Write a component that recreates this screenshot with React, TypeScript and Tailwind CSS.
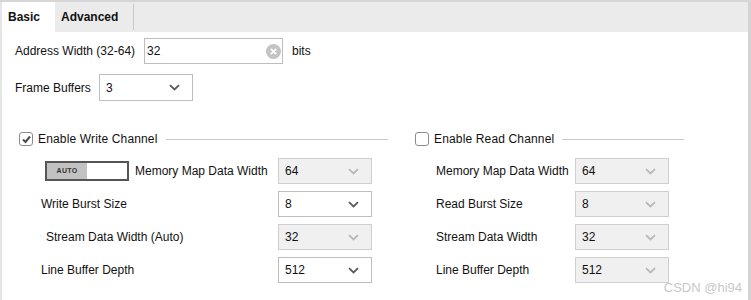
import React from "react";

const Chevron = ({ disabled }: { disabled?: boolean }) => (
  <svg width="11" height="7" viewBox="0 0 11 7" className="shrink-0">
    <path d="M1 1.2 L5.5 5.5 L10 1.2" fill="none" stroke={disabled ? "#b8b8b8" : "#5a5a5a"} strokeWidth="1.8" />
  </svg>
);

const Select = ({ value, disabled, w = 94, h = 26 }: { value: string; disabled?: boolean; w?: number; h?: number }) => (
  <div
    className={`flex items-center justify-between pl-[6px] pr-[12px] border ${
      disabled ? "bg-[#f0f0f0] border-[#cfcfcf]" : "bg-white border-[#bdbdbd]"
    }`}
    style={{ width: w, height: h }}
  >
    <span className="text-[12px] text-[#111]">{value}</span>
    <Chevron disabled={disabled} />
  </div>
);

const Checkbox = ({ checked }: { checked?: boolean }) => (
  <div className="w-[14px] h-[14px] rounded-[3px] border border-[#8c8c8c] bg-white flex items-center justify-center shrink-0">
    {checked && (
      <svg width="11" height="11" viewBox="0 0 11 11">
        <path d="M2 5.5 L4.5 8 L9 2.5" fill="none" stroke="#4a4a4a" strokeWidth="2" />
      </svg>
    )}
  </div>
);

const Header = ({ label, checked }: { label: string; checked?: boolean }) => (
  <div className="flex items-center h-[14px]">
    <Checkbox checked={checked} />
    <span className="ml-[5px] text-[12px] text-[#111] whitespace-nowrap tracking-[0.15px]">{label}</span>
    <div className="flex-1 ml-[8px] h-px bg-[#c8c8c8]" />
  </div>
);

const Row = ({ label, value, disabled, labelW, pl = 22 }: { label: string; value: string; disabled?: boolean; labelW: number; pl?: number }) => (
  <div className="flex items-center h-[26px]">
    <div className="text-[12px] text-[#111] whitespace-nowrap" style={{ paddingLeft: pl, width: labelW }}>
      {label}
    </div>
    <Select value={value} disabled={disabled} />
  </div>
);

export default function App() {
  return (
    <div
      className="w-[751px] h-[300px] bg-white relative overflow-hidden border-t-2 border-[#d6d6d6]"
      style={{ fontFamily: '"Liberation Sans", Arial, sans-serif' }}
    >
      <div className="absolute top-0 bottom-0 left-0 w-[2px] bg-[#e6e6e6]" />
      <div className="absolute top-0 bottom-0 right-0 w-[3px] bg-[#d4d4d4]" />
      {/* Tabs */}
      <div className="flex h-[30px] bg-[#ebebeb] mr-[3px]">
        <div className="w-[55px] bg-white flex items-center pl-[8px] text-[12px] font-bold text-[#111]">Basic</div>
        <div className="flex items-center pl-[6px] w-[78px] text-[12px] font-bold text-[#111]">Advanced</div>
        <div className="w-px my-[2px] bg-[#c8c8c8]" />
      </div>
      {/* Address width */}
      <div className="flex items-center mt-[6px] pl-[15px] h-[26px]">
        <span className="text-[12px] text-[#111] w-[129px] whitespace-nowrap">Address Width (32-64)</span>
        <div className="w-[139px] h-[26px] border border-[#bdbdbd] flex items-center justify-between pl-[2px] pr-[1px]">
          <span className="text-[12px] text-[#111]">32</span>
          <svg width="15" height="15" viewBox="0 0 15 15">
            <circle cx="7.5" cy="7.5" r="7.5" fill="#c4c4c4" />
            <path d="M4.8 4.8 L10.2 10.2 M10.2 4.8 L4.8 10.2" stroke="#fff" strokeWidth="1.8" />
          </svg>
        </div>
        <span className="ml-[9px] text-[12px] text-[#111]">bits</span>
      </div>
      {/* Frame buffers */}
      <div className="flex items-center mt-[10px] pl-[15px]">
        <span className="text-[12px] text-[#111] w-[84px] whitespace-nowrap">Frame Buffers</span>
        <Select value="3" h={27} />
      </div>
      {/* Channels */}
      <div className="flex mt-[31px]">
        <div className="ml-[19px] w-[369px]">
          <Header label="Enable Write Channel" checked />
          <div className="mt-[12px] flex flex-col gap-[7px]">
            <div className="flex items-center h-[26px]">
              <div className="ml-[26px] w-[84px] h-[20px] border-2 border-[#555] flex">
                <div className="w-[40px] bg-[#c2c2c2] flex items-center justify-center text-[7px] font-bold text-[#333] tracking-[0.3px]">AUTO</div>
                <div className="flex-1 bg-white" />
              </div>
              <span className="ml-[6px] w-[143px] text-[12px] text-[#111] whitespace-nowrap">Memory Map Data Width</span>
              <Select value="64" disabled />
            </div>
            <Row label="Write Burst Size" value="8" labelW={259} />
            <Row label="Stream Data Width (Auto)" value="32" disabled labelW={259} pl={27} />
            <Row label="Line Buffer Depth" value="512" labelW={259} />
          </div>
        </div>
        <div className="ml-[27px] w-[269px]">
          <Header label="Enable Read Channel" />
          <div className="mt-[12px] flex flex-col gap-[7px]">
            <Row label="Memory Map Data Width" value="64" disabled labelW={160} pl={21} />
            <Row label="Read Burst Size" value="8" disabled labelW={160} pl={21} />
            <Row label="Stream Data Width" value="32" disabled labelW={160} pl={21} />
            <Row label="Line Buffer Depth" value="512" disabled labelW={160} pl={21} />
          </div>
        </div>
      </div>
      <div className="absolute right-[9px] bottom-[3px] text-[13px] text-[#c8c8c8]">CSDN @hi94</div>
    </div>
  );
}
